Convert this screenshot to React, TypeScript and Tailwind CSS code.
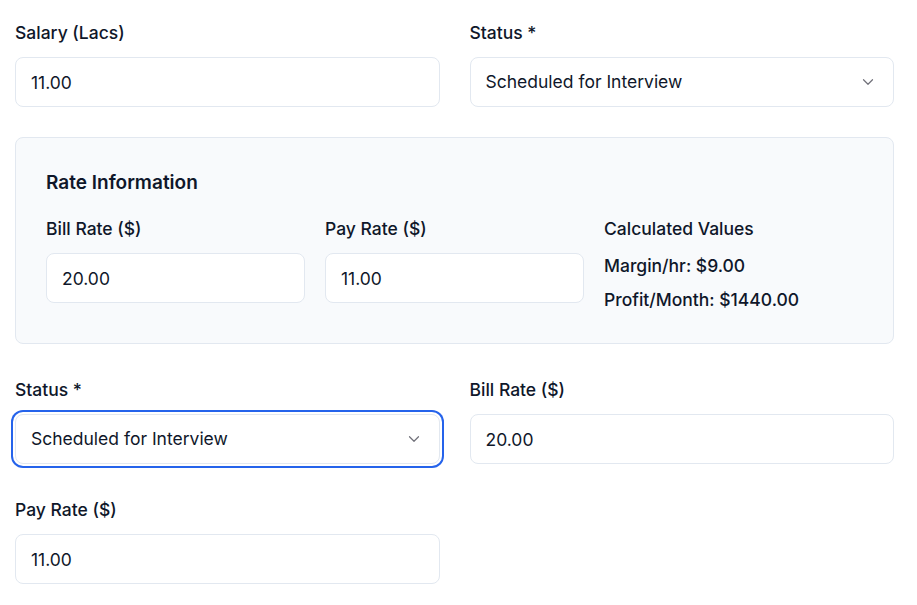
import { ChevronDown } from 'lucide-react'

function TextField({ label, value }: { label: string; value: string }) {
  return (
    <div>
      <label className="mb-3 block text-[17.5px] leading-6 font-medium">{label}</label>
      <input
        readOnly
        value={value}
        className="h-[50px] w-full rounded-lg border border-[#e2e8f0] bg-white pr-4 pl-[15px] text-[17.5px] text-[#0f172a] outline-none"
      />
    </div>
  )
}

function SelectField({ label, value, focused }: { label: string; value: string; focused?: boolean }) {
  return (
    <div>
      <label className="mb-3 block text-[17.5px] leading-6 font-medium">{label}</label>
      <button
        type="button"
        className={
          focused
            ? 'flex h-[50px] w-full items-center justify-between rounded-lg border border-[#e2e8f0] bg-white pr-4 pl-[15px] text-left text-[17.5px] ring-2 ring-[#2563eb] ring-offset-2 outline-none'
            : 'flex h-[50px] w-full items-center justify-between rounded-lg border border-[#e2e8f0] bg-white pr-4 pl-[15px] text-left text-[17.5px] outline-none'
        }
      >
        <span>{value}</span>
        <ChevronDown size={18} strokeWidth={1.6} className="text-[#71717a]" />
      </button>
    </div>
  )
}

export default function App() {
  return (
    <div className="min-h-screen bg-white font-['Inter',sans-serif] text-[#0f172a]">
      <div className="ml-[15px] w-[879px] pt-[21px]">
        <div className="grid grid-cols-2 gap-x-[30px]">
          <TextField label="Salary (Lacs)" value="11.00" />
          <SelectField label="Status *" value="Scheduled for Interview" />
        </div>

        <div className="mt-[30px] rounded-lg border border-[#e2e8f0] bg-[#f8fafc] px-[30px] pt-[31px] pb-[31px]">
          <h3 className="mb-5 text-[19px] leading-7 font-semibold">Rate Information</h3>
          <div className="grid grid-cols-3 gap-5">
            <TextField label="Bill Rate ($)" value="20.00" />
            <TextField label="Pay Rate ($)" value="11.00" />
            <div>
              <h4 className="text-[17.5px] leading-6 font-medium">Calculated Values</h4>
              <p className="mt-[13px] text-[17.5px] leading-6 font-medium">Margin/hr: $9.00</p>
              <p className="mt-[10px] text-[17.5px] leading-6 font-medium">Profit/Month: $1440.00</p>
            </div>
          </div>
        </div>

        <div className="mt-[34px] grid grid-cols-2 gap-x-[30px] gap-y-[34px]">
          <SelectField label="Status *" value="Scheduled for Interview" focused />
          <TextField label="Bill Rate ($)" value="20.00" />
          <TextField label="Pay Rate ($)" value="11.00" />
        </div>
      </div>
    </div>
  )
}
